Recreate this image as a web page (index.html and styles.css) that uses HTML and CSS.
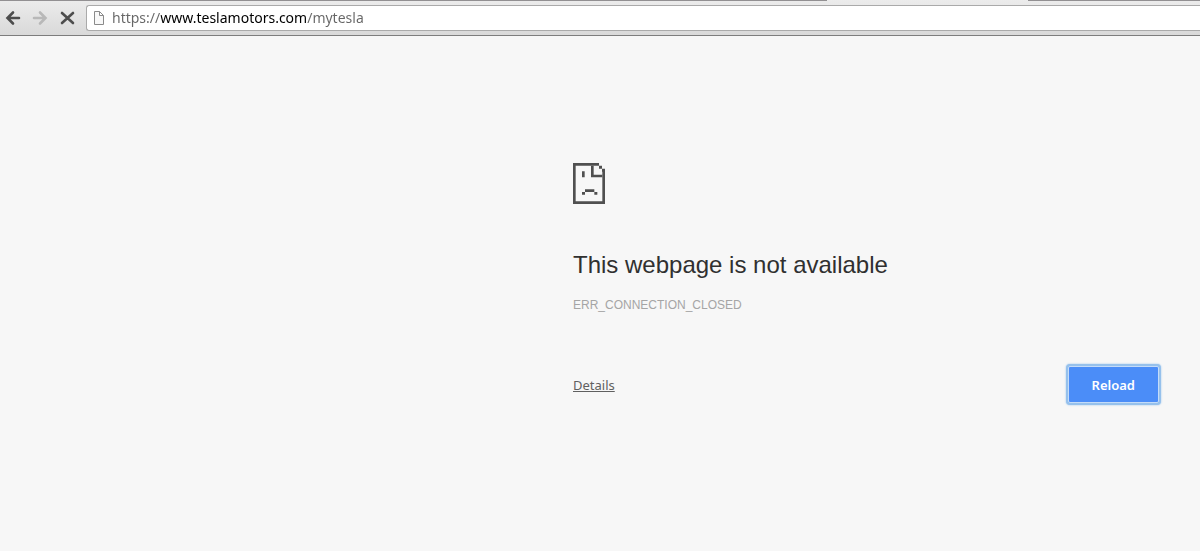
FILE: index.html
```html
<!DOCTYPE html>
<html lang="en">
<head>
    <meta charset="UTF-8">
    <meta name="viewport" content="width=device-width, initial-scale=1.0">
    <title>This webpage is not available</title>
    <link rel="stylesheet" href="styles.css">
</head>
<body>
    <header class="browser">
        <div class="tab-strip">
            <div class="tab-edge"></div>
            <div class="active-tab"></div>
            <div class="tab-edge tab-edge-end"></div>
        </div>
        <form class="toolbar">
            <button class="nav-button" type="button" aria-label="Back">
                <svg width="16" height="16" viewBox="0 0 16 16"><path d="M14 8H3M8 2.5L2.5 8l5.500 5.500"/></svg>
            </button>
            <button class="nav-button" type="button" aria-label="Forward" disabled>
                <svg width="16" height="16" viewBox="0 0 16 16"><path d="M2 8h11M8 2.500l5.500 5.500-5.500 5.500"/></svg>
            </button>
            <button class="nav-button" type="button" aria-label="Stop loading">
                <svg width="16" height="16" viewBox="0 0 16 16"><path d="M3 3l11 10M14 3L3 13"/></svg>
            </button>
            <div class="address-bar">
                <svg class="page-icon" width="12" height="16" viewBox="0 0 12 16"><path d="M1.500 1.500h5l4 4v9h-9zM6.500 1.500v4h4"/></svg>
                <input class="address" type="text" aria-label="Address" value="https://www.teslamotors.com/mytesla" spellcheck="false">
            </div>
        </form>
    </header>

    <main class="error-page">
        <svg class="sad-icon" width="32" height="41" viewBox="0 0 96 123" aria-hidden="true">
            <path d="M0 0h78v8H8v107h80V24h8v99H0z"/>
            <path d="M54 8h8v27h26v8H54zM78 8h9v9h-9zM87 17h9v9h-9z"/>
            <path d="M27 25h8v18h-8zM36 79h28v8H36zM27 87h9v8h-9zM64 87h9v8h-9z"/>
        </svg>
        <h1>This webpage is not available</h1>
        <div class="error-code">ERR_CONNECTION_CLOSED</div>
        <div class="actions">
            <a class="details" href="#">Details</a>
            <button class="reload" type="button">Reload</button>
        </div>
    </main>
</body>
</html>
```

FILE: styles.css
```css
* {
    box-sizing: border-box;
}

body {
    margin: 0;
    min-height: 100vh;
    background: #f7f7f7;
    font-family: "Liberation Sans", Arial, sans-serif;
}

.browser {
    background: linear-gradient(#ececec, #d9d9d9);
    border-bottom: 1px solid #7d7d7d;
}

.tab-strip {
    display: flex;
    height: 1px;
}

.tab-edge {
    flex: 827;
    background: #929092;
}

.active-tab {
    flex: 201;
}

.tab-edge-end {
    flex: 172;
}

.toolbar {
    display: flex;
    align-items: center;
    padding: 4px 0 4px 5px;
}

.nav-button {
    display: flex;
    width: 16px;
    margin-right: 11px;
    padding: 0;
    border: 0;
    background: none;
}

.nav-button svg {
    fill: none;
    stroke: #4d4d4d;
    stroke-width: 2.6;
    stroke-linecap: round;
}

.nav-button:disabled svg {
    stroke: #b8b8b8;
}

.address-bar {
    display: flex;
    flex: 1;
    align-items: center;
    height: 26px;
    padding-left: 6px;
    background: #fff;
    border: 1px solid #aaa;
    border-right: 0;
    border-radius: 3px 0 0 3px;
}

.page-icon {
    fill: #f8f8f8;
    stroke: #8a8a8a;
}

/* The host name is darker than the rest of the address */
.address {
    flex: 1;
    height: 24px;
    margin-left: 7px;
    padding: 0 0 1px;
    border: 0;
    outline: 0;
    font: 14px "Noto Sans", sans-serif;
    color: #000;
    background: linear-gradient(to right, #666 49px, #000 49px, #000 195px, #666 195px);
    -webkit-background-clip: text;
    background-clip: text;
    -webkit-text-fill-color: transparent;
}

.error-page {
    max-width: 627px;
    margin-left: auto;
    padding: 127px 40px 40px 0;
}

.sad-icon {
    display: block;
    fill: #505050;
}

h1 {
    margin: 46px 0 0;
    color: #303030;
    font-size: 24px;
    font-weight: normal;
    line-height: 30px;
}

.error-code {
    margin-top: 16px;
    color: #a5a5a5;
    font-size: 12px;
    line-height: 18px;
}

.actions {
    display: flex;
    align-items: center;
    justify-content: space-between;
    margin-top: 52px;
    font-family: "Noto Sans", sans-serif;
    font-size: 13px;
}

.details {
    color: #606060;
}

.reload {
    height: 37px;
    margin-right: 1px;
    padding: 0 23px;
    border: 1px solid #c5dcf8;
    border-radius: 2px;
    background: #4b8df8;
    box-shadow: 0 0 0 2px #96c1ec, 0 0 2px 2px #96c1ec;
    color: #fff;
    font: 600 13px "Noto Sans", sans-serif;
}
```
